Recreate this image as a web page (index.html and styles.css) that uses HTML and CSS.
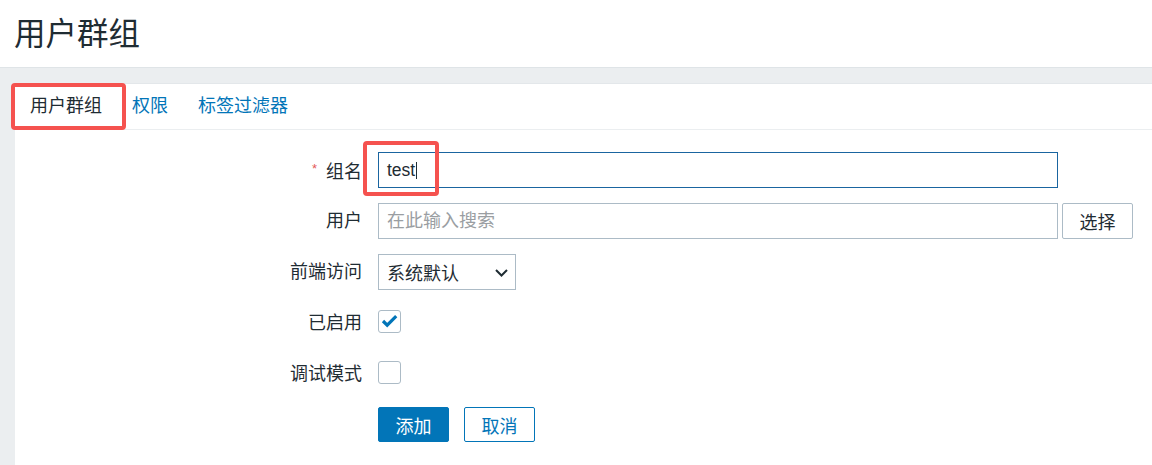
FILE: index.html
```html
<!DOCTYPE html>
<html lang="zh-CN">
<head>
<meta charset="utf-8">
<title>用户群组</title>
<link rel="stylesheet" href="styles.css">
</head>
<body>
<header class="page-header">
  <h1 class="page-title">用户群组</h1>
</header>
<main class="wrapper">
  <section class="panel">
    <ul class="tabs">
      <li class="tab tab-active marked">用户群组</li>
      <li class="tab">权限</li>
      <li class="tab">标签过滤器</li>
    </ul>
    <form class="form-grid">
      <label class="form-label"><span class="req">*</span>组名</label>
      <div class="form-field">
        <div class="text-box text-box-focus marked-field">test<span class="caret"></span></div>
      </div>

      <label class="form-label">用户</label>
      <div class="form-field field-row">
        <input class="text-input" type="text" placeholder="在此输入搜索">
        <button type="button" class="btn-grey">选择</button>
      </div>

      <label class="form-label">前端访问</label>
      <div class="form-field">
        <div class="select-box">
          <span>系统默认</span>
          <svg class="chevron" width="13" height="8" viewBox="0 0 13 8"><path d="M1 1 L6.5 6.5 L12 1" fill="none" stroke="#1f2c33" stroke-width="2"/></svg>
        </div>
      </div>

      <label class="form-label">已启用</label>
      <div class="form-field field-check">
        <span class="checkbox">
          <svg width="21" height="21" viewBox="0 0 21 21"><path d="M4 10 L8.2 14.2 L17.2 5.2" fill="none" stroke="#0275b8" stroke-width="3.2"/></svg>
        </span>
      </div>

      <label class="form-label">调试模式</label>
      <div class="form-field field-check">
        <span class="checkbox"></span>
      </div>

      <div class="form-label"></div>
      <div class="form-field field-buttons">
        <button type="button" class="btn-primary">添加</button>
        <button type="button" class="btn-alt">取消</button>
      </div>
    </form>
  </section>
</main>
</body>
</html>
```

FILE: styles.css
```css
*,
*::before,
*::after {
  box-sizing: border-box;
}

html, body {
  margin: 0;
  padding: 0;
  height: 100%;
  overflow: hidden;
}

body {
  font-family: "Liberation Sans", "Noto Sans CJK SC", sans-serif;
  color: #1f2c33;
  background: #ffffff;
  display: flex;
  flex-direction: column;
}

.page-header {
  height: 68px;
  padding-left: 14px;
  display: flex;
  align-items: center;
  border-bottom: 1px solid #dfe4e7;
  background: #ffffff;
}

.page-title {
  margin: 0;
  font-size: 31.5px;
  font-weight: normal;
  line-height: 1;
  color: #1f2c33;
  padding-top: 2px;
}

.wrapper {
  flex: 1;
  background: #ebeef0;
  padding: 15px 0 0 15px;
  display: flex;
}

.panel {
  flex: 1;
  background: #ffffff;
  border-top: 1px solid #e3e7ea;
  display: flex;
  flex-direction: column;
}

.tabs {
  list-style: none;
  margin: 0;
  padding: 0;
  display: flex;
  height: 46px;
  border-bottom: 1px solid #ebeef0;
}

.tab {
  padding: 0 15px;
  font-size: 18px;
  line-height: 45px;
  color: #0275b8;
}

.tab-active {
  color: #1f2c33;
}

.marked {
  position: relative;
}

.marked::after {
  content: "";
  position: absolute;
  left: -4px;
  right: -9px;
  top: -1px;
  bottom: -1px;
  border: 4px solid #f5524f;
  border-radius: 4px;
}

.form-grid {
  display: grid;
  grid-template-columns: 347px 680px 1fr;
  grid-auto-rows: 36px;
  column-gap: 16px;
  row-gap: 15px;
  padding: 22px 0 20px 0;
}

.form-label {
  grid-column: 1;
  align-self: center;
  text-align: right;
  font-size: 18px;
  line-height: 24px;
  color: #1f2c33;
}

.req {
  color: #e45959;
  font-size: 13px;
  vertical-align: 5px;
  margin-right: 9px;
}

.form-field {
  grid-column: 2 / span 2;
  display: flex;
  align-items: center;
}

.text-box,
.text-input {
  width: 680px;
  height: 36px;
  border: 1px solid #acbbc6;
  padding: 0 8px;
  font-family: "Liberation Sans", "Noto Sans CJK SC", sans-serif;
  font-size: 18px;
  color: #1f2c33;
  background: #ffffff;
  display: flex;
  align-items: center;
  outline: none;
}

.text-input::placeholder {
  color: #9a9ea2;
}

.text-box-focus {
  border-color: #1a65a0;
  font-size: 17.5px;
}

.caret {
  display: inline-block;
  width: 1px;
  height: 17px;
  background: #1f2c33;
  margin-left: 1px;
}

.marked-field {
  position: relative;
}

.marked-field::after {
  content: "";
  position: absolute;
  left: -16px;
  top: -12px;
  width: 76px;
  height: 55px;
  border: 4px solid #f5524f;
  border-radius: 4px;
}

.field-row {
  gap: 4px;
}

.btn-grey {
  width: 71px;
  height: 36px;
  border: 1px solid #acbbc6;
  border-radius: 2px;
  background: #ffffff;
  font-family: "Liberation Sans", "Noto Sans CJK SC", sans-serif;
  font-size: 18px;
  color: #1f2c33;
  padding: 0;
}

.select-box {
  width: 138px;
  height: 36px;
  border: 1px solid #acbbc6;
  padding: 0 7px 0 8px;
  font-size: 18px;
  display: flex;
  align-items: center;
  justify-content: space-between;
  background: #ffffff;
}

.chevron {
  margin-top: 1px;
}

.field-check {
  align-items: flex-start;
  padding-top: 5px;
}

.checkbox {
  width: 23px;
  height: 23px;
  border: 1px solid #acbbc6;
  border-radius: 3px;
  background: #ffffff;
  display: flex;
}

.field-buttons {
  gap: 15px;
  align-items: flex-start;
  padding-top: 0;
}

.btn-primary,
.btn-alt {
  width: 71px;
  height: 35px;
  border-radius: 2px;
  font-family: "Liberation Sans", "Noto Sans CJK SC", sans-serif;
  font-size: 18px;
  padding: 0;
}

.btn-primary {
  background: #0275b8;
  border: 1px solid #0275b8;
  color: #ffffff;
}

.btn-alt {
  background: #ffffff;
  border: 1px solid #0275b8;
  color: #0275b8;
}
```
